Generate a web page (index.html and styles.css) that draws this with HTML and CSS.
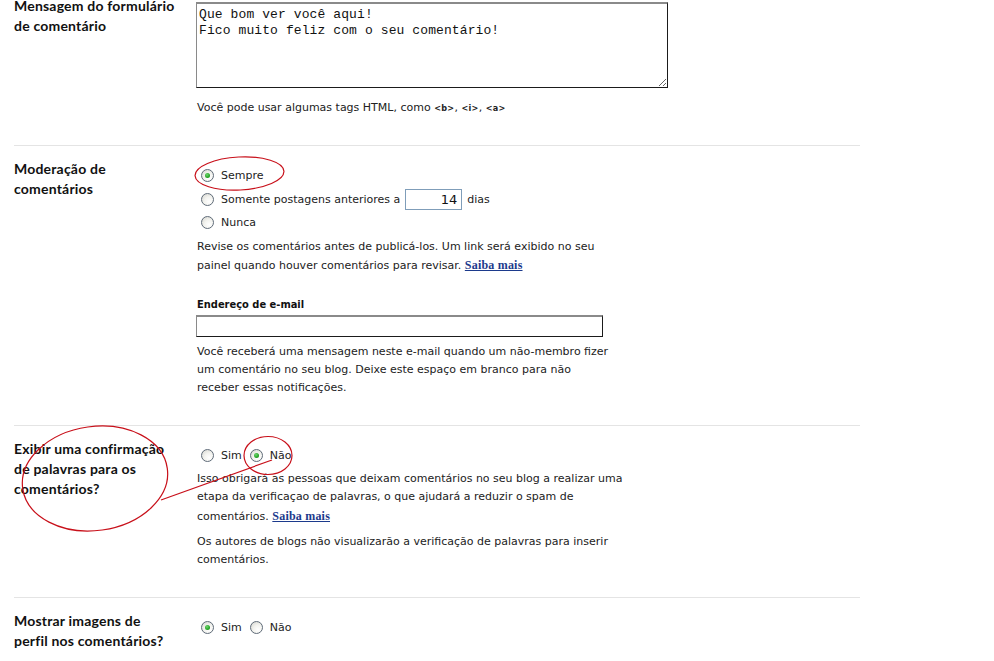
FILE: index.html
```html
<!DOCTYPE html>
<html lang="pt-BR">
<head>
<meta charset="utf-8">
<title>Comentários</title>
<link rel="stylesheet" href="styles.css">
</head>
<body>
<div class="page">
  <section class="row first">
    <div class="label">Mensagem do formulário<br>de comentário</div>
    <div class="field">
      <textarea class="msg">Que bom ver você aqui!
Fico muito feliz com o seu comentário!</textarea>
      <p class="hint">Você pode usar algumas tags HTML, como <code>&lt;b&gt;</code>, <code>&lt;i&gt;</code>, <code>&lt;a&gt;</code></p>
    </div>
  </section>

  <section class="row">
    <div class="label">Moderação de<br>comentários</div>
    <div class="field">
      <div class="opt"><span class="radio on"></span><span>Sempre</span></div>
      <div class="opt"><span class="radio"></span><span>Somente postagens anteriores a</span><span class="days">14</span><span>dias</span></div>
      <div class="opt"><span class="radio"></span><span>Nunca</span></div>
      <p class="desc d19">Revise os comentários antes de publicá-los. Um link será exibido no seu<br>painel quando houver comentários para revisar. <a href="#">Saiba mais</a></p>
      <div class="sublabel">Endereço de e-mail</div>
      <div class="email"></div>
      <p class="desc d18 after-input">Você receberá uma mensagem neste e-mail quando um não-membro fizer<br>um comentário no seu blog. Deixe este espaço em branco para não<br>receber essas notificações.</p>
    </div>
  </section>

  <section class="row">
    <div class="label">Exibir uma confirmação<br>de palavras para os<br>comentários?</div>
    <div class="field">
      <div class="opt"><span class="radio"></span><span class="sim">Sim</span><span class="radio on"></span><span>Não</span></div>
      <p class="desc d185">Isso obrigará as pessoas que deixam comentários no seu blog a realizar uma<br>etapa da verificaçao de palavras, o que ajudará a reduzir o spam de<br>comentários. <a href="#">Saiba mais</a></p>
      <p class="desc d18 second">Os autores de blogs não visualizarão a verificação de palavras para inserir<br>comentários.</p>
    </div>
  </section>

  <section class="row last">
    <div class="label">Mostrar imagens de<br>perfil nos comentários?</div>
    <div class="field">
      <div class="opt"><span class="radio on"></span><span class="sim">Sim</span><span class="radio"></span><span>Não</span></div>
    </div>
  </section>

  <svg class="marks" width="994" height="661" viewBox="0 0 994 661" aria-hidden="true">
    <ellipse cx="239.5" cy="173.5" rx="44.5" ry="16.5" transform="rotate(-3 239.5 173.5)"/>
    <ellipse cx="268" cy="455.5" rx="24" ry="19"/>
    <ellipse cx="95" cy="478.5" rx="73" ry="52" transform="rotate(-8 95 478.5)"/>
    <path d="M161 500 L272 460"/>
  </svg>
</div>
</body>
</html>
```

FILE: styles.css
```css
html, body {
  margin: 0;
  padding: 0;
  background: #fff;
}

body {
  font-family: "DejaVu Sans", sans-serif;
  font-size: 11px;
  letter-spacing: 0;
  color: #222;
  overflow: hidden;
}

.page {
  position: relative;
  width: 846px;
  margin-left: 14px;
}

.row {
  display: grid;
  grid-template-columns: 183px 1fr;
  padding: 13px 0 28px;
  border-bottom: 1px solid #e4e4e4;
}

.row.first {
  padding-top: 0;
}

.row.last {
  border-bottom: none;
}

.label {
  font-family: Lato, "Open Sans", sans-serif;
  font-weight: 700;
  font-size: 14px;
  letter-spacing: 0.2px;
  line-height: 20px;
  color: #111;
  white-space: nowrap;
}

.first .label {
  margin-top: -4px;
}

.field {
  padding-top: 5px;
}

.first .field {
  padding-top: 2px;
}

.msg {
  display: block;
  box-sizing: border-box;
  width: 472px;
  height: 86px;
  margin: 0 0 0 -1px;
  padding: 3px 2px;
  border-style: solid;
  border-width: 2px 1px 1px 1px;
  border-color: #8a8a8a #1b1b1b #1b1b1b #8a8a8a;
  font-family: "Liberation Mono", monospace;
  font-size: 13px;
  letter-spacing: 0.1px;
  line-height: 16px;
  color: #111;
  resize: both;
  outline: none;
}

.hint {
  margin: 11px 0 0;
  line-height: 18px;
}

.hint code {
  font-family: "DejaVu Sans Condensed", sans-serif;
  font-size: 9px;
  font-weight: bold;
  letter-spacing: 0.3px;
}

.opt {
  display: flex;
  align-items: center;
  height: 23.5px;
  white-space: nowrap;
}

.radio {
  box-sizing: border-box;
  width: 13px;
  height: 13px;
  margin: 0 7px 0 4px;
  border: 1px solid #5f6b78;
  border-radius: 50%;
  background: radial-gradient(circle at 65% 70%, #ffffff 0%, #f3f3ef 45%, #d2d2cc 100%);
  position: relative;
  flex: none;
}

.radio.on::after {
  content: "";
  position: absolute;
  left: 3px;
  top: 3px;
  width: 5px;
  height: 5px;
  border-radius: 50%;
  background: radial-gradient(circle at 40% 35%, #6fd46f 0%, #24a524 60%, #168016 100%);
}

.sim {
  margin-right: 4px;
}

.days {
  box-sizing: border-box;
  width: 57px;
  height: 21px;
  margin: 0 5px;
  padding: 0 4px 0 0;
  border: 1px solid #7f9db9;
  font-size: 13px;
  letter-spacing: 0;
  line-height: 19px;
  text-align: right;
  color: #111;
}

.desc {
  margin: 2px 0 0;
  white-space: nowrap;
}

.d19 { line-height: 19px; }
.d18 { line-height: 18px; }
.d185 { line-height: 18.5px; }

.desc.second {
  margin-top: 7px;
}

.desc.after-input {
  margin-top: 6px;
}

.desc a {
  font-family: "Liberation Serif", serif;
  font-weight: bold;
  font-size: 12px;
  letter-spacing: 0.2px;
  color: #1c3a8c;
  text-decoration: underline;
}

.sublabel {
  margin-top: 21.5px;
  font-family: "DejaVu Sans Condensed", sans-serif;
  font-weight: bold;
  letter-spacing: 0;
  line-height: 18px;
  color: #111;
}

.email {
  box-sizing: border-box;
  width: 407px;
  height: 22px;
  margin: 1px 0 0 -1px;
  border-style: solid;
  border-width: 2px 1px 1px 1px;
  border-color: #8a8a8a #1b1b1b #1b1b1b #8a8a8a;
  background: #fff;
}

.marks {
  position: absolute;
  left: -14px;
  top: 0;
  pointer-events: none;
}

.marks ellipse,
.marks path {
  fill: none;
  stroke: #c8101a;
  stroke-width: 1.2;
}
```
